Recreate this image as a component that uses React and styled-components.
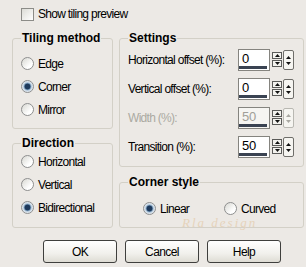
import React from "react";
import styled, { createGlobalStyle } from "styled-components";

const GlobalStyle = createGlobalStyle`
  html, body {
    margin: 0;
    padding: 0;
    background: #ece9e5;
  }
  body {
    font-family: "Liberation Sans", Arial, sans-serif;
    font-size: 12px;
    letter-spacing: -0.7px;
    color: #000;
  }
`;

const Dialog = styled.div`
  width: 306px;
  height: 267px;
  box-sizing: border-box;
  padding: 7px 2px 0 12px;
  display: flex;
  flex-direction: column;
  background: #ece9e5;
  white-space: nowrap;
`;

const CheckRow = styled.label`
  display: flex;
  align-items: center;
  gap: 4px;
  height: 14px;
  margin-left: 9px;
`;

const CheckBox = styled.span`
  width: 13px;
  height: 13px;
  box-sizing: border-box;
  border: 1px solid #8c8c88;
  background: linear-gradient(135deg, #dcdcd6, #ffffff);
`;

const Columns = styled.div`
  display: flex;
  gap: 6px;
  margin-top: 10px;
`;

const Column = styled.div`
  display: flex;
  flex-direction: column;
  gap: ${(p) => p.$gap}px;
  width: ${(p) => p.$width}px;
`;

const Group = styled.fieldset`
  margin: 0;
  padding: 0 ${(p) => p.$right || 8}px 0 8px;
  border: 1px solid #d3d0c7;
  border-radius: 3px;
  height: ${(p) => p.$height}px;
  box-sizing: border-box;
  min-width: 0;
`;

const Legend = styled.legend`
  padding: 0 1px;
  margin-left: 0;
  font-weight: bold;
  font-size: 12px;
  line-height: 14px;
  letter-spacing: 0;
  color: #000;
`;

const RadioList = styled.div`
  display: flex;
  flex-direction: column;
  padding-top: ${(p) => p.$top}px;
`;

const RadioRow = styled.label`
  display: flex;
  align-items: center;
  gap: 4px;
  height: 23px;
  width: ${(p) => (p.$width ? `${p.$width}px` : "auto")};
`;

const RadioDot = styled.span`
  width: 13px;
  height: 13px;
  box-sizing: border-box;
  border-radius: 50%;
  border: 1px solid #8e8f8f;
  background: ${(p) =>
    p.$on
      ? "radial-gradient(circle, #1e3a5c 0 2.6px, #6c8fb0 3.2px, #c7d6e4 4.2px, #eef2f5 6px)"
      : "linear-gradient(135deg, #d8d8d2, #ffffff 70%)"};
  flex-shrink: 0;
`;

const SettingsList = styled.div`
  display: flex;
  flex-direction: column;
  padding-top: 4px;
`;

const SettingRow = styled.div`
  display: flex;
  align-items: center;
  height: 29px;
  color: ${(p) => (p.$disabled ? "#aba9a2" : "#000")};
`;

const SettingLabel = styled.span`
  flex: 1;
  margin-top: -7px;
`;

const Field = styled.div`
  width: 32px;
  height: 22px;
  box-sizing: border-box;
  border: 1px solid #85847f;
  background: ${(p) => (p.$disabled ? "#f6f5f2" : "#fff")};
  display: flex;
  flex-direction: column;
  align-self: flex-start;
`;

const FieldValue = styled.span`
  flex: 1;
  padding: 2px 0 0 3px;
  font-size: 13px;
  line-height: 14px;
  letter-spacing: -0.3px;
  color: ${(p) => (p.$disabled ? "#a19f98" : "#000")};
`;

const FieldBar = styled.span`
  height: 3px;
  margin: 0 2px 1px 0;
  background: #3a4352;
`;

const SpinPair = styled.div`
  display: flex;
  flex-direction: column;
  gap: 1px;
  width: 10px;
  margin-left: 2px;
  align-self: flex-start;
  margin-top: 3px;
`;

const SpinButton = styled.span`
  height: 7px;
  box-sizing: border-box;
  border: 1px solid #5a5a58;
  background: #f3f2ee;
  display: flex;
  align-items: center;
  justify-content: center;
`;

const SpinTall = styled.div`
  width: 11px;
  height: 20px;
  margin-left: 1px;
  box-sizing: border-box;
  border: 1px solid ${(p) => (p.$disabled ? "#b9b8b2" : "#6f6e6a")};
  border-radius: 2px;
  background: #f6f5f1;
  display: flex;
  flex-direction: column;
  align-items: center;
  justify-content: center;
  gap: 3px;
  align-self: flex-start;
  margin-top: 1px;
`;

const Arrow = ({ down, color = "#111" }) => (
  <svg width="5" height="3" viewBox="0 0 5 3">
    <path d={down ? "M0 0H5L2.5 3Z" : "M0 3H5L2.5 0Z"} fill={color} />
  </svg>
);

const Spinner = ({ value, disabled }) => (
  <>
    <Field $disabled={disabled}>
      <FieldValue $disabled={disabled}>{value}</FieldValue>
      <FieldBar />
    </Field>
    <SpinPair>
      <SpinButton>
        <Arrow />
      </SpinButton>
      <SpinButton>
        <Arrow down />
      </SpinButton>
    </SpinPair>
    <SpinTall $disabled={disabled}>
      <Arrow color={disabled ? "#a9a8a2" : "#111"} />
      <Arrow down color={disabled ? "#a9a8a2" : "#111"} />
    </SpinTall>
  </>
);

const CornerRow = styled.div`
  display: flex;
  padding: 8px 0 0 15px;
`;

const Watermark = styled.div`
  margin: -4px 0 0 54px;
  font-family: "Liberation Serif", serif;
  font-style: italic;
  font-size: 13px;
  line-height: 14px;
  letter-spacing: 2px;
  color: #e6d3bb;
`;

const ButtonRow = styled.div`
  display: flex;
  gap: 8px;
  margin: 12px 0 0 31px;
`;

const Button = styled.button`
  width: 74px;
  height: 23px;
  box-sizing: border-box;
  border: 1px solid #3f3f3d;
  border-radius: 3px;
  background: linear-gradient(#ffffff, #f1f0ec 60%, #dedcd4);
  font-family: "Liberation Sans", Arial, sans-serif;
  font-size: 12px;
  letter-spacing: -0.6px;
  color: #000;
  padding: 0;
`;

const settings = [
  { label: "Horizontal offset (%):", value: "0" },
  { label: "Vertical offset (%):", value: "0" },
  { label: "Width (%):", value: "50", disabled: true },
  { label: "Transition (%):", value: "50" },
];

const App = () => {
  return (
    <Dialog>
      <GlobalStyle />
      <CheckRow>
        <CheckBox />
        <span>Show tiling preview</span>
      </CheckRow>
      <Columns>
        <Column $width={101} $gap={7}>
          <Group $height={98}>
            <Legend>Tiling method</Legend>
            <RadioList $top={7}>
              <RadioRow>
                <RadioDot />
                Edge
              </RadioRow>
              <RadioRow>
                <RadioDot $on />
                Corner
              </RadioRow>
              <RadioRow>
                <RadioDot />
                Mirror
              </RadioRow>
            </RadioList>
          </Group>
          <Group $height={92}>
            <Legend>Direction</Legend>
            <RadioList $top={0}>
              <RadioRow>
                <RadioDot />
                Horizontal
              </RadioRow>
              <RadioRow>
                <RadioDot />
                Vertical
              </RadioRow>
              <RadioRow>
                <RadioDot $on />
                Bidirectional
              </RadioRow>
            </RadioList>
          </Group>
        </Column>
        <Column $width={185} $gap={8}>
          <Group $height={136} $right={9}>
            <Legend>Settings</Legend>
            <SettingsList>
              {settings.map((s) => (
                <SettingRow key={s.label} $disabled={s.disabled}>
                  <SettingLabel>{s.label}</SettingLabel>
                  <Spinner value={s.value} disabled={s.disabled} />
                </SettingRow>
              ))}
            </SettingsList>
          </Group>
          <Group $height={53}>
            <Legend>Corner style</Legend>
            <CornerRow>
              <RadioRow $width={81}>
                <RadioDot $on />
                Linear
              </RadioRow>
              <RadioRow>
                <RadioDot />
                Curved
              </RadioRow>
            </CornerRow>
            <Watermark>Rla design</Watermark>
          </Group>
        </Column>
      </Columns>
      <ButtonRow>
        <Button type="button">OK</Button>
        <Button type="button">Cancel</Button>
        <Button type="button">Help</Button>
      </ButtonRow>
    </Dialog>
  );
};

export default App;
